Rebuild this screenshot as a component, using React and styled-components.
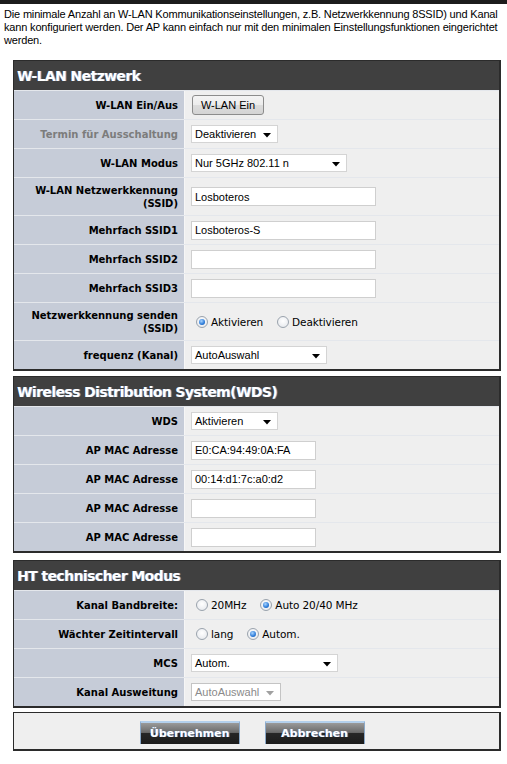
import React from "react";
import styled, { createGlobalStyle, css } from "styled-components";

const GlobalStyle = createGlobalStyle`
  html, body { margin: 0; padding: 0; background: #fff; }
  body {
    font-family: "Liberation Sans", Arial, sans-serif;
    font-size: 11px;
    color: #000;
  }
`;

const Page = styled.div`
  width: 507px;
  border-top: 4px solid #1c1c1c;
`;

const Intro = styled.p`
  margin: 0;
  padding: 4px 4px 0 4px;
  line-height: 13px;
  font-size: 11px;
  letter-spacing: -0.17px;
`;

const Sections = styled.div`
  display: flex;
  flex-direction: column;
  gap: 5px;
  padding: 13px 6px 0 13px;
`;

const Panel = styled.section`
  border: 1px solid #2b2b2b;
  border-right-width: 2px;
  border-bottom-width: 2px;
  background: #efefef;
  margin-bottom: ${(p) => p.$after || 0}px;
`;

const PanelHeader = styled.h2`
  margin: 0;
  height: 29px;
  display: flex;
  align-items: center;
  padding-left: 3px;
  background: #404040;
  color: #fff;
  font-family: "DejaVu Sans", Verdana, sans-serif;
  font-size: 14px;
  letter-spacing: -0.6px;
  font-weight: bold;
  text-shadow: 1px 0 0 #7a8fb5;
`;

const Row = styled.div`
  display: grid;
  grid-template-columns: 170px 1fr;
  min-height: ${(p) => (p.$tall ? 37 : 28)}px;
  border-top: 1px solid #e4e7ec;
`;

const Label = styled.div`
  background: #c6ccd8;
  display: flex;
  align-items: center;
  justify-content: flex-end;
  text-align: right;
  padding-right: 6px;
  font-family: "DejaVu Sans", Verdana, sans-serif;
  font-size: 10px;
  font-weight: bold;
  line-height: 13px;
  color: ${(p) => (p.$muted ? "#7c7c7c" : "#000")};
`;

const Value = styled.div`
  display: flex;
  align-items: center;
  gap: 15px;
  padding-left: 6px;
  border-left: 1px solid #f6f6f6;
`;

const TextField = styled.input`
  box-sizing: border-box;
  width: ${(p) => p.$w}px;
  height: 19px;
  border: 1px solid #cfcfcf;
  background: #fff;
  font-family: "Liberation Sans", Arial, sans-serif;
  font-size: 11px;
  padding: 0 3px;
  margin: 0;
  outline: none;
  color: #000;
`;

const SelectBox = styled.div`
  box-sizing: border-box;
  width: ${(p) => p.$w}px;
  height: 18px;
  display: flex;
  align-items: center;
  justify-content: space-between;
  padding: 0 6px 0 3px;
  background: #fff;
  border: 1px solid #d4d4d4;
  font-size: 11px;
  ${(p) =>
    p.$disabled &&
    css`
      color: #8a8a8a;
      border-color: #c4c4c4;
    `}
`;

const Arrow = ({ color = "#000" }) => (
  <svg width="8" height="5" viewBox="0 0 8 5" style={{ marginTop: 2 }}>
    <path d="M0 0 H8 L4 4.5 Z" fill={color} />
  </svg>
);

const Select = ({ w, children, disabled }) => (
  <SelectBox $w={w} $disabled={disabled}>
    <span>{children}</span>
    <Arrow color={disabled ? "#a0a0a0" : "#000"} />
  </SelectBox>
);

const PlainButton = styled.button`
  box-sizing: border-box;
  width: 72px;
  height: 20px;
  margin: 0 0 0 1px;
  border: 1px solid #8c8c8c;
  border-radius: 3px;
  background: linear-gradient(#f4f4f4 0%, #ececec 50%, #dcdcdc 51%, #d4d4d4 100%);
  font-family: "Liberation Sans", Arial, sans-serif;
  font-size: 11px;
  color: #000;
  padding: 0;
`;

const RadioGroup = styled.div`
  display: flex;
  align-items: center;
  gap: 14px;
  padding-left: 5px;
`;

const RadioLabel = styled.label`
  display: inline-flex;
  align-items: center;
  gap: 3px;
  font-family: "DejaVu Sans", Verdana, sans-serif;
  font-size: 10.5px;
  letter-spacing: -0.1px;
`;

const RadioDot = styled.span`
  box-sizing: border-box;
  width: 12px;
  height: 12px;
  border-radius: 50%;
  border: 1px solid #9aa3ad;
  background: radial-gradient(circle at 50% 40%, #ffffff 0%, #e2e5ea 100%);
  display: inline-flex;
  align-items: center;
  justify-content: center;
  &::after {
    content: "";
    width: 6px;
    height: 6px;
    border-radius: 50%;
    display: ${(p) => (p.$on ? "block" : "none")};
    background: radial-gradient(circle at 40% 35%, #a8d4ff 0%, #2a7ad8 60%, #14509e 100%);
  }
`;

const Radio = ({ on, children }) => (
  <RadioLabel>
    <RadioDot $on={on} />
    {children}
  </RadioLabel>
);

const ActionPanel = styled.div`
  border: 1px solid #2b2b2b;
  border-right-width: 2px;
  border-bottom-width: 2px;
  background: #efefef;
  height: 36px;
  display: flex;
  align-items: center;
  justify-content: center;
  gap: 25px;
  padding-right: 9px;
`;

const ActionButton = styled.button`
  box-sizing: border-box;
  width: 100px;
  height: 23px;
  margin-top: 2px;
  padding: 0;
  border: 1px solid #8aa8c8;
  border-bottom: none;
  border-top: 2px solid #b4d0ec;
  background: linear-gradient(#9a9a9a 0%, #6a6a6a 45%, #262626 50%, #1c1c1c 100%);
  color: #fff;
  font-family: "DejaVu Sans", Verdana, sans-serif;
  font-size: 11px;
  font-weight: bold;
  text-shadow: 1px 0 0 #6b8cc0;
`;

const sections = [
  {
    title: "W-LAN Netzwerk",
    after: 0,
    rows: [
      { label: "W-LAN Ein/Aus", value: <PlainButton>W-LAN Ein</PlainButton> },
      { label: "Termin für Ausschaltung", muted: true, value: <Select w={87}>Deaktivieren</Select> },
      { label: "W-LAN Modus", value: <Select w={156}>Nur 5GHz 802.11 n</Select> },
      { label: <>W-LAN Netzwerkkennung<br />(SSID)</>, tall: true, value: <TextField $w={185} defaultValue="Losboteros" /> },
      { label: "Mehrfach SSID1", value: <TextField $w={185} defaultValue="Losboteros-S" /> },
      { label: "Mehrfach SSID2", value: <TextField $w={185} /> },
      { label: "Mehrfach SSID3", value: <TextField $w={185} /> },
      {
        label: <>Netzwerkkennung senden<br />(SSID)</>,
        tall: true,
        value: (
          <RadioGroup>
            <Radio on>Aktivieren</Radio>
            <Radio>Deaktivieren</Radio>
          </RadioGroup>
        ),
      },
      { label: "frequenz (Kanal)", value: <Select w={136}>AutoAuswahl</Select> },
    ],
  },
  {
    title: "Wireless Distribution System(WDS)",
    after: 2,
    rows: [
      { label: "WDS", value: <Select w={87}>Aktivieren</Select> },
      { label: "AP MAC Adresse", value: <TextField $w={125} defaultValue="E0:CA:94:49:0A:FA" /> },
      { label: "AP MAC Adresse", value: <TextField $w={125} defaultValue="00:14:d1:7c:a0:d2" /> },
      { label: "AP MAC Adresse", value: <TextField $w={125} /> },
      { label: "AP MAC Adresse", value: <TextField $w={125} /> },
    ],
  },
  {
    title: "HT technischer Modus",
    after: -1,
    rows: [
      {
        label: "Kanal Bandbreite:",
        value: (
          <RadioGroup>
            <Radio>20MHz</Radio>
            <Radio on>Auto 20/40 MHz</Radio>
          </RadioGroup>
        ),
      },
      {
        label: "Wächter Zeitintervall",
        value: (
          <RadioGroup>
            <Radio>lang</Radio>
            <Radio on>Autom.</Radio>
          </RadioGroup>
        ),
      },
      { label: "MCS", value: <Select w={147}>Autom.</Select> },
      { label: "Kanal Ausweitung", value: <Select w={90} disabled>AutoAuswahl</Select> },
    ],
  },
];

export default function App() {
  return (
    <Page>
      <GlobalStyle />
      <Intro>
        Die minimale Anzahl an W-LAN Kommunikationseinstellungen, z.B. Netzwerkkennung 8SSID) und Kanal
        kann konfiguriert werden. Der AP kann einfach nur mit den minimalen Einstellungsfunktionen eingerichtet
        werden.
      </Intro>
      <Sections>
        {sections.map((s) => (
          <Panel key={s.title} $after={s.after}>
            <PanelHeader>{s.title}</PanelHeader>
            {s.rows.map((r, i) => (
              <Row key={i} $tall={r.tall}>
                <Label $muted={r.muted}>
                  <span>{r.label}</span>
                </Label>
                <Value>{r.value}</Value>
              </Row>
            ))}
          </Panel>
        ))}
        <ActionPanel>
          <ActionButton>Übernehmen</ActionButton>
          <ActionButton>Abbrechen</ActionButton>
        </ActionPanel>
      </Sections>
    </Page>
  );
}
